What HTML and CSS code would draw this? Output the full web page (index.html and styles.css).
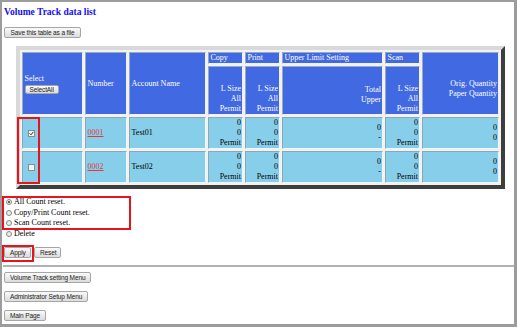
FILE: index.html
```html
<!DOCTYPE html>
<html>
<head>
<meta charset="utf-8">
<link rel="stylesheet" href="styles.css">
</head>
<body>
<div class="frame">
  <h1 class="title">Volume Track data list</h1>
  <button class="btn save">Save this table as a file</button>
  <table class="data">
    <colgroup>
      <col class="c-sel"><col class="c-num"><col class="c-acc"><col class="c-cnt"><col class="c-cnt"><col class="c-up"><col class="c-cnt"><col class="c-orig">
    </colgroup>
    <tr class="hr1">
      <th rowspan="2" class="sel">Select<br><button class="btn selall">SelectAll</button></th>
      <th rowspan="2">Number</th>
      <th rowspan="2">Account Name</th>
      <th>Copy</th>
      <th>Print</th>
      <th>Upper Limit Setting</th>
      <th>Scan</th>
      <th rowspan="2" class="r orig">Orig. Quantity<br>Paper Quantity</th>
    </tr>
    <tr class="hr2">
      <th class="r bot">L Size<br>All<br>Permit</th>
      <th class="r bot">L Size<br>All<br>Permit</th>
      <th class="r bot up">Total<br>Upper</th>
      <th class="r bot">L Size<br>All<br>Permit</th>
    </tr>
    <tr class="drow">
      <td><span class="cb"><svg width="5" height="5" viewBox="0 0 5 5"><path d="M0.6 2.4 L2 3.8 L4.4 0.8" fill="none" stroke="#333" stroke-width="1"/></svg></span></td>
      <td><a class="num" href="#">0001</a></td>
      <td>Test01</td>
      <td class="r">0<br>0<br>Permit</td>
      <td class="r">0<br>0<br>Permit</td>
      <td class="r">0<br>-</td>
      <td class="r">0<br>0<br>Permit</td>
      <td class="r">0<br>0</td>
    </tr>
    <tr class="drow">
      <td><span class="cb"></span></td>
      <td><a class="num" href="#">0002</a></td>
      <td>Test02</td>
      <td class="r">0<br>0<br>Permit</td>
      <td class="r">0<br>0<br>Permit</td>
      <td class="r">0<br>-</td>
      <td class="r">0<br>0<br>Permit</td>
      <td class="r">0<br>0</td>
    </tr>
  </table>
  <div class="opts">
    <div class="opt"><span class="rb on"></span>All Count reset.</div>
    <div class="opt"><span class="rb"></span>Copy/Print Count reset.</div>
    <div class="opt"><span class="rb"></span>Scan Count reset.</div>
    <div class="opt"><span class="rb"></span>Delete</div>
  </div>
  <div class="actions">
    <button class="btn">Apply</button>
    <button class="btn">Reset</button>
  </div>
  <hr class="rule">
  <div class="menu">
    <button class="btn">Volume Track setting Menu</button>
    <button class="btn">Administrator Setup Menu</button>
    <button class="btn">Main Page</button>
  </div>
  <div class="mark m1"></div>
  <div class="mark m2"></div>
  <div class="mark m3"></div>
</div>
</body>
</html>
```
FILE: styles.css
```css
html {
  background: #9c9c9c;
  height: 100%;
}
body {
  margin: 0;
  height: 100%;
  overflow: hidden;
}
.frame {
  position: relative;
  box-sizing: border-box;
  margin: 2px 3px 0 2px;
  height: 322px;
  padding: 4px 2px 0 2px;
  background: #fff;
  font-family: "Liberation Serif", "Times New Roman", serif;
  font-size: 8px;
  line-height: 10.5px;
  color: #000;
}
.title {
  margin: 0;
  font-size: 9.5px;
  line-height: 12px;
  font-weight: bold;
  color: #1010ee;
}
.btn {
  display: block;
  box-sizing: border-box;
  height: 11px;
  padding: 0 5px;
  border: 1px solid #a6a6a6;
  border-radius: 2px;
  background: linear-gradient(#fafafa, #dcdcdc);
  font-family: "Liberation Sans", Arial, sans-serif;
  font-size: 6.5px;
  letter-spacing: -0.12px;
  line-height: 9px;
  color: #222;
}
.save {
  margin-top: 9px;
  width: 77px;
}
.data {
  margin: 8px 0 0 12px;
  width: 489px;
  table-layout: fixed;
  border-collapse: separate;
  border-spacing: 2px;
  border: 4px solid;
  border-color: #d9d9d9 #3e3e3e #3e3e3e #d9d9d9;
  background: #f2f2f2;
}
.c-sel { width: 61px; }
.c-num { width: 42px; }
.c-acc { width: 77px; }
.c-cnt { width: 35px; }
.c-up { width: 101px; }
.c-orig { width: 77px; }
.data th,
.data td {
  padding: 0 1px 0 1.5px;
  font-weight: normal;
  text-align: left;
  vertical-align: middle;
  white-space: nowrap;
  overflow: hidden;
  border: 1px solid;
  border-color: #9aa8c8 #eef2f8 #eef2f8 #9aa8c8;
  line-height: 10px;
}
.data th {
  background: #4169e1;
  color: #fff;
}
.data td {
  background: #87ceeb;
  border-color: #8aa8b8 #eef6fa #eef6fa #8aa8b8;
}
.data .r { text-align: right; }
.data .bot { vertical-align: bottom; }
.data .up { padding-bottom: 9px; }
.data .orig { vertical-align: bottom; padding-bottom: 15px; }
.hr1 { height: 12px; }
.hr2 { height: 49px; }
.drow { height: 32px; }
.selall {
  height: 9px;
  line-height: 7px;
  padding: 0 4px;
  margin: 1px 0 0 0;
}
.cb {
  display: block;
  box-sizing: border-box;
  width: 7px;
  height: 7px;
  margin-left: 3px;
  border: 1px solid #8c8c8c;
  background: #f4f4f4;
  position: relative;
}
.cb svg {
  display: block;
}
.num {
  color: #e03a3a;
  text-decoration: underline;
}
.opts {
  margin-top: 8px;
}
.opt {
  display: flex;
  align-items: center;
  height: 10.5px;
}
.rb {
  box-sizing: border-box;
  width: 6px;
  height: 6px;
  margin: 0 2px 0 2px;
  border: 1px solid #8a8a8a;
  border-radius: 50%;
  background: #ececec;
  position: relative;
}
.rb.on::after {
  content: "";
  position: absolute;
  left: 1px;
  top: 1px;
  width: 2px;
  height: 2px;
  border-radius: 50%;
  background: #333;
}
.actions {
  display: flex;
  gap: 3px;
  margin-top: 8px;
}
.actions .btn:first-child { width: 27px; }
.actions .btn:last-child { width: 27px; }
.rule {
  margin: 7px -2px 0 -1px;
  height: 0;
  border: 0;
  border-top: 2px solid #b2b2b2;
}
.menu {
  display: flex;
  flex-direction: column;
  align-items: flex-start;
  gap: 8px;
  margin-top: 5px;
}
.mark {
  position: absolute;
  border: 2.5px solid #e8141c;
  box-sizing: border-box;
}
.m1 { left: 15px; top: 115px; width: 23px; height: 67px; }
.m2 { left: 0; top: 194px; width: 129px; height: 34px; }
.m3 { left: 0; top: 243px; width: 32px; height: 17px; }
```
